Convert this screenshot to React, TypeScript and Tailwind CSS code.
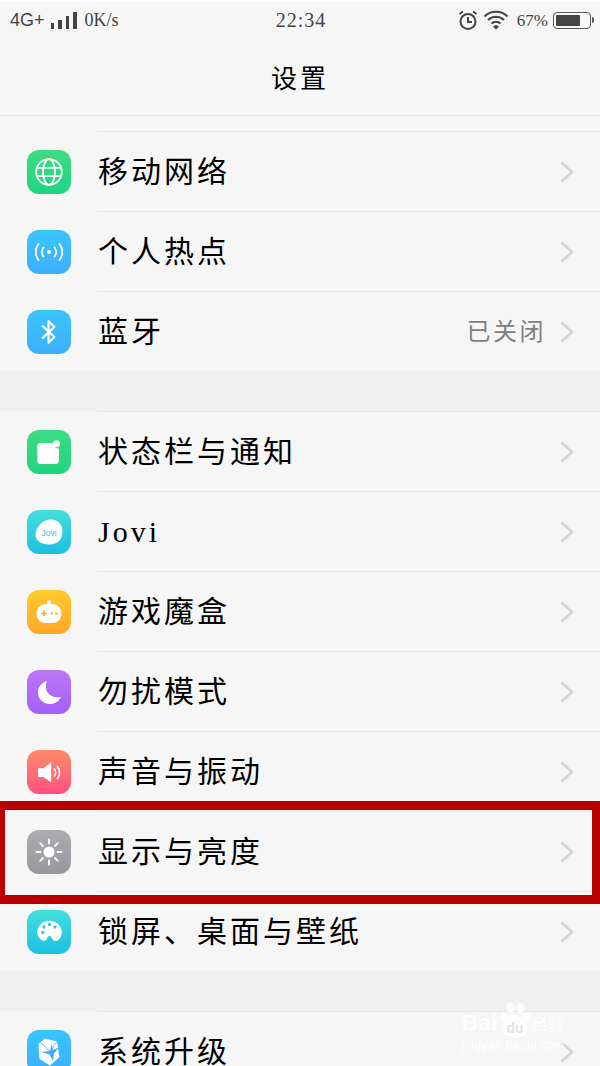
import React from 'react'

const CJK = "font-['Liberation_Serif','Noto_Sans_CJK_SC',serif]"

function Tile({ className, children }: { className: string; children: React.ReactNode }) {
  return (
    <div className={`flex h-[44px] w-[44px] shrink-0 items-center justify-center rounded-[12px] ${className}`}>
      {children}
    </div>
  )
}

const GlobeIcon = () => (
  <svg width="28" height="28" viewBox="0 0 28 28" fill="none" stroke="#fff" strokeWidth="1.800">
    <circle cx="14" cy="14" r="12.800" />
    <ellipse cx="14" cy="14" rx="6" ry="12.800" />
    <path d="M2.500 9.800h23M2.500 18.200h23" />
  </svg>
)

const HotspotIcon = () => (
  <svg width="28" height="18" viewBox="0 0 28 18" fill="none" stroke="#fff" strokeWidth="1.800" strokeLinecap="round">
    <circle cx="14" cy="9" r="2" fill="#fff" stroke="none" />
    <path d="M8.500 4.500a7 7 0 0 0 0 9M19.500 4.500a7 7 0 0 1 0 9" />
    <path d="M3.500 1a13 13 0 0 0 0 16M24.500 1a13 13 0 0 1 0 16" />
  </svg>
)

const BluetoothIcon = () => (
  <svg width="18" height="28" viewBox="0 0 20 30" fill="none" stroke="#fff" strokeWidth="2.400" strokeLinejoin="round" strokeLinecap="round">
    <path d="M3 8.500l13 12-6.500 6.500V3l6.500 6.500-13 12" />
  </svg>
)

const NoticeIcon = () => (
  <svg width="24" height="24" viewBox="0 0 24 24">
    <path d="M4 3h12.500a5 5 0 0 0 5.500 5.500V20a4 4 0 0 1-4 4H4a4 4 0 0 1-4-4V7a4 4 0 0 1 4-4z" fill="#fff" />
    <circle cx="19.500" cy="3.800" r="3.500" fill="#fff" />
  </svg>
)

const JoviIcon = () => (
  <svg width="28" height="26" viewBox="0 0 28 26">
    <path d="M16 0.500c7 0 11.500 5 11.500 12 0 8-5 13-13 13C6 25.500 0.500 21.500 0.500 15.500 0.500 8 8 0.500 16 0.500z" fill="#fff" />
    <text x="14" y="16.500" textAnchor="middle" fontSize="8.500" fontFamily="Liberation Sans" fill="#35c5dc">Jovi</text>
  </svg>
)

const GameIcon = () => (
  <svg width="26" height="24" viewBox="0 0 28 26">
    <path d="M14 0.500a1.500 1.500 0 0 1 1 3.500c7 0 12.500 3.500 12.500 10.500 0 7-5 10.500-10 10.500h-7c-5 0-10-3.500-10-10.500C0.500 7.500 6 4 13 4a1.500 1.500 0 0 1 1-3.500z" fill="#fff" />
    <path d="M5.500 14.500h6M8.500 11.500v6" stroke="#fdb022" strokeWidth="2" />
    <circle cx="17" cy="14.500" r="1.300" fill="#fdb022" />
    <circle cx="22" cy="14.500" r="1.300" fill="#fdb022" />
  </svg>
)

const MoonIcon = () => (
  <svg width="25" height="25" viewBox="0 0 28 28">
    <path d="M11 1C7 12 14 21 27 19c-3 5.500-8 8-12.500 8C7 27 1 21 1 14 1 8 5 3 11 1z" fill="#fff" />
  </svg>
)

const SoundIcon = () => (
  <svg width="25" height="21" viewBox="0 0 28 24" fill="none">
    <path d="M1 7h6l9-6.500v23L7 17H1z" fill="#fff" />
    <path d="M19.500 8a6 6 0 0 1 0 8M23 5a11 11 0 0 1 0 14" stroke="#fff" strokeWidth="1.800" strokeLinecap="round" />
  </svg>
)

const SunIcon = () => (
  <svg width="28" height="28" viewBox="0 0 28 28" stroke="#fff" strokeWidth="1.800" strokeLinecap="round">
    <circle cx="14" cy="14" r="5.500" fill="#fff" stroke="none" />
    <path d="M14 1.500v4M14 22.500v4M1.500 14h4M22.500 14h4M5.200 5.200l2.800 2.800M20 20l2.800 2.800M5.200 22.800L8 20M20 8l2.800-2.800" />
  </svg>
)

const PaletteIcon = () => (
  <svg width="27" height="27" viewBox="0 0 32 32">
    <path d="M16 2C8 2 1.500 8 1.500 15.500 1.500 22.500 7 27 11 25.500c3-1 1.500-5 4.500-5.500 3-.5 3 5 7 6 4 1 8-4 8-10.500C30.500 8 24 2 16 2z" fill="#fff" />
    <circle cx="8" cy="16" r="2" fill="#35c8d8" />
    <circle cx="9.500" cy="9.500" r="2" fill="#35c8d8" />
    <circle cx="16" cy="6.500" r="2" fill="#35c8d8" />
    <circle cx="22.500" cy="9.500" r="2" fill="#35c8d8" />
  </svg>
)

const UpgradeIcon = () => (
  <svg width="22" height="28" viewBox="0 0 22 28">
    <path d="M7 0.500L19 3.500 21.500 19 12 27.500 1.500 21 0.500 6z" fill="#fff" />
    <path d="M12 13L13.500 6 15 12 21 9.500 16 15.500 15 23 11.500 16.500 3 14z" fill="#3eaefb" />
    <path d="M3 5l9 8M12 13l7-9" stroke="#3eaefb" strokeWidth="0.800" />
  </svg>
)

const Chevron = () => (
  <svg width="14" height="22" viewBox="0 0 14 22" fill="none" stroke="#d4d4d4" strokeWidth="2.400">
    <path d="M1.500 1.500L12 11 1.500 20.500" />
  </svg>
)

type RowData = { label: string; tile: string; icon: React.ReactNode; value?: string }

function Row({ label, tile, icon, value }: RowData) {
  return (
    <div className="relative flex h-[80px] items-center pl-[27px] pr-[26px] pt-[2px]">
      <div className="absolute left-[97px] right-0 top-0 h-px bg-[#e8e8e8]" />
      <Tile className={tile}>{icon}</Tile>
      <span className={`ml-[27px] text-[30px] leading-none tracking-[3px] text-black ${CJK}`}>{label}</span>
      {value && <span className={`ml-auto mr-[14px] text-[24px] leading-none tracking-[2.500px] text-[#808080] ${CJK}`}>{value}</span>}
      <div className={value ? '' : 'ml-auto'}>
        <Chevron />
      </div>
    </div>
  )
}

const GROUP_ONE: RowData[] = [
  { label: '移动网络', tile: 'bg-gradient-to-b from-[#3ddc84] to-[#1dd47f]', icon: <GlobeIcon /> },
  { label: '个人热点', tile: 'bg-gradient-to-b from-[#38c6fd] to-[#3eaefb]', icon: <HotspotIcon /> },
  { label: '蓝牙', tile: 'bg-gradient-to-b from-[#38c6fd] to-[#3eaefb]', icon: <BluetoothIcon />, value: '已关闭' },
]

const GROUP_TWO: RowData[] = [
  { label: '状态栏与通知', tile: 'bg-gradient-to-b from-[#3ddc84] to-[#1dd47f]', icon: <NoticeIcon /> },
  { label: 'Jovi', tile: 'bg-gradient-to-b from-[#45dfdc] to-[#18c0e0]', icon: <JoviIcon /> },
  { label: '游戏魔盒', tile: 'bg-gradient-to-b from-[#ffcb2e] to-[#ffa726]', icon: <GameIcon /> },
  { label: '勿扰模式', tile: 'bg-gradient-to-b from-[#bb78f5] to-[#a45ffa]', icon: <MoonIcon /> },
  { label: '声音与振动', tile: 'bg-gradient-to-b from-[#ff8a66] to-[#ff4f80]', icon: <SoundIcon /> },
  { label: '显示与亮度', tile: 'bg-gradient-to-b from-[#acacb0] to-[#97979d]', icon: <SunIcon /> },
  { label: '锁屏、桌面与壁纸', tile: 'bg-gradient-to-b from-[#45dfdc] to-[#18c0e0]', icon: <PaletteIcon /> },
]

function StatusBar() {
  return (
    <div className="flex h-[36px] items-center pl-[10px] pr-[6px] text-[#444]">
      <div className="flex flex-1 items-center">
        <span className="font-['Liberation_Sans',sans-serif] text-[18px] leading-none">4G+</span>
        <div className="ml-[6px] flex items-end gap-[4px]">
          <div className="h-[6px] w-[3.500px] bg-[#444]" />
          <div className="h-[9px] w-[3.500px] bg-[#444]" />
          <div className="h-[13px] w-[3.500px] bg-[#444]" />
          <div className="h-[17px] w-[3.500px] bg-[#444]" />
        </div>
        <span className="ml-[8px] font-['Liberation_Serif',serif] text-[18px] leading-none">0K/s</span>
      </div>
      <span className="-ml-[2px] font-['Liberation_Serif',serif] text-[20px] leading-none tracking-[1px]">22:34</span>
      <div className="flex flex-1 items-center justify-end">
        <svg width="20" height="20" viewBox="0 0 20 20" fill="none" stroke="#444" strokeWidth="2">
          <circle cx="10" cy="11.500" r="7.500" />
          <path d="M10 7v5h4M1.500 4L5 1.500M18.500 4L15 1.500" />
        </svg>
        <svg className="ml-[5px]" width="26" height="20" viewBox="0 0 26 20" fill="none" stroke="#444" strokeWidth="2">
          <path d="M1.500 6.500a16.500 16.500 0 0 1 23 0M5 10a11.500 11.500 0 0 1 16 0M8.500 13.500a6.500 6.500 0 0 1 9 0" />
          <path d="M13 19.500l-3-3a4 4 0 0 1 6 0z" fill="#444" stroke="none" />
        </svg>
        <span className="ml-[8px] font-['Liberation_Serif',serif] text-[17px] leading-none">67%</span>
        <div className="ml-[5px] flex items-center">
          <div className="h-[17px] w-[38px] rounded-[4px] border border-[#555] p-[2px]">
            <div className="h-full w-[24px] rounded-[1px] bg-[#444]" />
          </div>
          <div className="ml-[1px] h-[6px] w-[2px] rounded-r bg-[#555]" />
        </div>
      </div>
    </div>
  )
}

export default function App() {
  return (
    <div className="relative h-[1066px] w-[600px] overflow-hidden bg-[#f6f6f6]">
      <div className="h-[2px] bg-white" />
      <StatusBar />
      <div className="flex h-[78px] items-center justify-center border-b border-[#e8e8e8] pt-[6px]">
        <h1 className={`text-[26px] font-normal leading-none tracking-[3px] text-black ${CJK}`}>设置</h1>
      </div>
      <div className="h-[15px]" />
      {GROUP_ONE.map((r) => (
        <Row key={r.label} {...r} />
      ))}
      <div className="h-[40px] bg-[#f0f0f0]" />
      {GROUP_TWO.map((r) => (
        <Row key={r.label} {...r} />
      ))}
      <div className="h-[40px] bg-[#f0f0f0]" />
      <Row
        label="系统升级"
        tile="bg-gradient-to-b from-[#38c6fd] to-[#3eaefb]"
        icon={<UpgradeIcon />}
      />

      {/* red highlight drawn over the list */}
      <div className="absolute left-0 right-0 top-[801px] h-[103px] border-y-[9px] border-l-[5px] border-r-[8px] border-[#b90000]" />

      {/* baidu watermark */}
      <div className="absolute left-[460px] top-[1000px] flex w-[106px] flex-col items-center text-white/80">
        <div className="flex items-end whitespace-nowrap">
          <span className="mb-[4px] font-['Liberation_Sans',sans-serif] text-[22px] font-bold leading-none tracking-[0.5px]">Bai</span>
          <svg width="34" height="38" viewBox="0 0 32 36" fill="#fff" fillOpacity="0.8" className="shrink-0">
            <ellipse cx="6" cy="17" rx="4" ry="5" />
            <ellipse cx="12" cy="7" rx="4" ry="5" />
            <ellipse cx="21" cy="7" rx="4" ry="5" />
            <ellipse cx="27" cy="17" rx="4" ry="5" />
            <path d="M16 14c-6 0-12 8-12 14 0 6 5 7 12 7s12-1 12-7c0-6-6-14-12-14z" />
            <text x="16" y="31" textAnchor="middle" fontSize="13" fontWeight="700" fontFamily="Liberation Sans" fill="#dcdcdc">du</text>
          </svg>
          <span className={`mb-[5px] text-[16px] leading-none ${CJK}`}>经验</span>
        </div>
        <span className="mt-[1px] whitespace-nowrap font-['Liberation_Sans',sans-serif] text-[12px] leading-none tracking-[0.4px]">jingyan.baidu.com</span>
      </div>
    </div>
  )
}
